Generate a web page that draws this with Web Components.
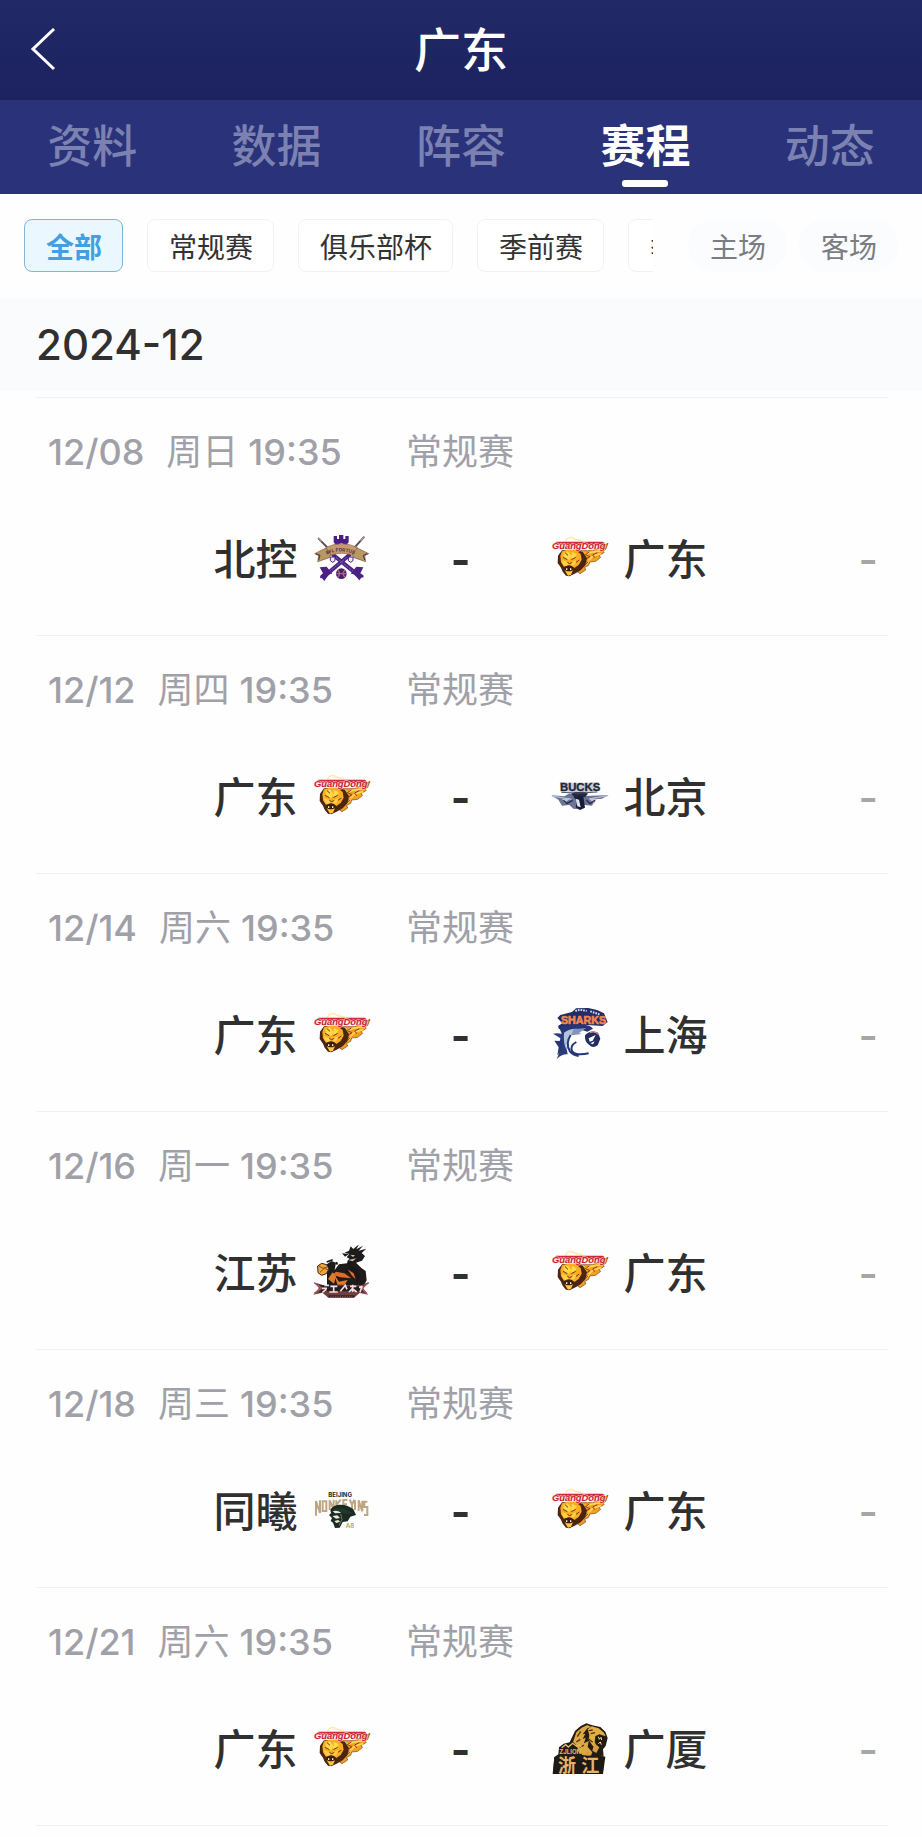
<!DOCTYPE html>
<html lang="zh-CN">
<head>
<meta charset="utf-8">
<meta name="viewport" content="width=device-width, initial-scale=1">
<title>广东</title>
<style>
    body {
        margin: 0;
        background: #fefefe;
        color: #303030;
        font-family: Inter, "Noto Sans CJK SC", sans-serif;
    }
</style>
</head>
<body>
<team-page></team-page>

<script>
const logos = {
    beikong: {
        box: '39 33 174 174',
        art: `
            <g fill="none" stroke-linecap="round">
                <path d="M56 56L100 101M191 52L147 101" stroke="#5c4d55" stroke-width="6"/>
                <path d="M57 55l7 7M190 53l-7 8" stroke="#b5a494" stroke-width="4"/>
                <path d="M148 105L74 168M100 105L175 166" stroke="#4b2185" stroke-width="12"/>
                <path d="M139 113L88 155M109 113l52 42" stroke="#9d83bd" stroke-width="2" stroke-dasharray="5 5"/>
            </g>
            <path d="M101 48h10v9h6V45h13v12h6v-9h10v19l-5 6v17h-35V73l-5-6z" fill="#4a1d83"/>
            <path d="M119 86V72q5-6 10 0v14z" fill="#d8cde5"/>
            <path d="M59 142l21-2 17 21-10 2-14 20-7-8-6-1 1-7 8-7zM190 142l-21-2-17 21 10 2 16 18 6-8 7-1-1-6-9-6z" fill="#4b2185"/>
            <path d="M78 82q47-22 94 0l-8 26q-39-17-78 0z" fill="#c79a6b" stroke="#8a6748" stroke-width="2"/>
            <path d="M78 84L44 101l12 6-3 18 35-12 4-12zM172 84l34 17-12 6 3 18-35-12-5-12z" fill="#b99864" stroke="#74583c" stroke-width="2"/>
            <path d="M48 101l12 5-4 14M202 101l-12 5 4 14" fill="none" stroke="#3f3040" stroke-width="3"/>
            <path id="ribbon" d="M80 104q45-22 100 6" fill="none"/>
            <text font-size="14" font-weight="700" fill="#4f3140"><textPath href="#ribbon">BFL FORTUS</textPath></text>
            <path d="M91 111h14v11l-7 5-7-5zM145 111h14v11l-7 5-7-5z" fill="#efeaf5" stroke="#4b2185" stroke-width="3"/>
            <circle cx="124" cy="161" r="16" fill="#4a1d6c"/>
            <path d="M113 150q11 11 0 22M135 150q-11 11 0 22M109 161h30" fill="none" stroke="#a46c79" stroke-width="4"/>`
    },
    guangdong: {
        box: '45 33 174 174',
        art: `
            <path d="M88 65q6-15 20-12l12 6 20 4" fill="none" stroke="#ffeab0" stroke-width="5"/>
            <path d="M110 92h60l46-22-7 18-8 5 4 4-16 10 5 5-15 12-18 2-3 10-12 6 3 8-17 11-8-6-20-6z" fill="#f3a021" stroke="#75401a" stroke-width="2"/>
            <path d="M207 79l-17 14-30 5-14 8M196 101l-24 6-14 14M140 140l18-16M144 96l-8 13 14 9-8 14" fill="none" stroke="#ffd857" stroke-width="5"/>
            <path d="M160 96l-12 8 14 6-20 12 13 5-15 13M184 98l-14 7 6 8" fill="none" stroke="#8e3b1c" stroke-width="3"/>
            <path d="M78 91l-12 16-1 22 10 14 5 12 10 12 10 2 16-8 18-10 14-15 5-21-12-19-22-7z" fill="#4b2412"/>
            <path d="M78 94l16-5 24 1 16 12 3 17-9 16-13 9-8-7-14-2-9 6-9-14-2-19z" fill="#f8ad22"/>
            <path d="M82 99l14-5 10 14-7 13-15-9zM108 95l14 8-6 11-11 4z" fill="#ffd94c"/>
            <path d="M78 120l16 6 4 9-10 4-8-8zM104 126l17-5-5 13-9 4z" fill="#ffd04a"/>
            <path d="M81 112l13 7M106 119l13-7M87 98l9 8M120 127l10-7M94 127l7 4 8-4" fill="none" stroke="#713912" stroke-width="3"/>
            <path d="M86 143l13-5 13 4-3 14-9 7-9-6z" fill="#3b1d10"/>
            <path d="M86 151l7 3h11l7-3-6 13-9 3z" fill="#ffc641"/>
            <path d="M92 145v5M104 145v5" stroke="#fff5ce" stroke-width="4"/>
            <path d="M60 65h140l6 4-3 5H54z" fill="#cf273b"/>
            <text x="48" y="87" font-family="Liberation Sans" font-size="28" font-weight="700" font-style="italic" fill="#c8203a" stroke="#ffe0c8" stroke-width="3" paint-order="stroke">GuangDong</text>`
    },
    beijing: {
        box: '45 27 174 174',
        art: `
            <path d="M46 106l39 3 16-9 18 7 15-6 17 7 67-3-20 11-19 2-11 19-26-3-11 14-19-2-12-11-22 2-11-18z" fill="#6b7492"/>
            <path d="M49 108l57 10M160 117l55-10" stroke="#b1bbcf" stroke-width="4"/>
            <path d="M78 117l25-3-16 15M182 117l-23-2 15 17" fill="#bfc8df"/>
            <path d="M82 121l11 9 17-9M177 121l-15 10-11-11" fill="none" stroke="#252c4d" stroke-width="4"/>
            <path d="M118 91l15-5 11 8-2 15 5 34-15 7-13-8 4-19-10-12z" fill="#171c37"/>
            <path d="M127 93l9 5-7 6zM119 116l10 3 5 23-10-3z" fill="#dae0ee"/>
            <path d="M105 101q27-14 51 0l-9 11-15-5-14 6z" fill="#242943"/>
            <path d="M71 66q61 6 119 0l-5 27q-54 6-108 1z" fill="#c6ccd7"/>
            <text x="72" y="92" font-family="Liberation Sans" font-size="34" font-weight="700" fill="#1d273a" stroke="#1d273a" stroke-width="1">BUCKS</text>
            <path d="M76 97q53 5 108-1" fill="none" stroke="#4c566c" stroke-width="3"/>`
    },
    shanghai: {
        box: '45 36 174 174',
        art: `
            <path d="M73 60l35-9 12-11 37-1 26 6 21 10 11 26-15 12-48-3-66 5-17 8-3-10 13-8-15-16z" fill="#222c68"/>
            <path d="M118 48q16-6 34 0M163 49l30 10" fill="none" stroke="#d5dce8" stroke-width="6" stroke-dasharray="5 3"/>
            <text x="75" y="86" font-family="Liberation Sans" font-size="32" font-weight="700" fill="#f28650" stroke="#f28650" stroke-width="2">SHARKS</text>
            <path d="M70 99q32-14 73-10 21 2 28 12l-17 9-16-5-32 7-23 18-2 31-17 20 4-24-13-20 16 1 7-20z" fill="#263575"/>
            <path d="M51 116q19 10 30 20-7 30-19 57 14-16 33-15l-5-28 11-27q-26-11-50-7z" fill="#2b3c7d"/>
            <path d="M84 113q24-18 55-9-27 7-38 24-14 24-8 40-12-22-9-55" fill="#b4c3db"/>
            <path d="M107 119q15-15 34-8l17 6q-16 9-21 23l-15 3q-16 15-3 26l27 6-27 7q-26-7-27-30 1-25 15-33" fill="#fff"/>
            <path d="M112 103l39-4-22 15 8 3-31 4z" fill="#8293bc"/>
            <path d="M104 120q-17 26-2 49 8 11 26 14M121 141q-21 12-12 28 11 14 49 6" fill="none" stroke="#243779" stroke-width="6"/>
            <path d="M147 121q16-18 39-8l7 18-8 20q-15 10-25-1-15-8-13-29" fill="#232d60"/>
            <path d="M158 130l21-10-9 17-9 3zM163 145l13-6-5 9z" fill="#fff"/>
            <path d="M162 113q15-7 26 6" fill="none" stroke="#d77f87" stroke-width="4"/>`
    },
    jiangsu: {
        box: '39 30 174 174',
        art: `
            <path d="M81 120l-2-31 15-11 14 5-4 22 13-17 24-3 18-8-19-10 8-10-14-4 13-6 5-13 8 8 17-14-8 15 20-11-13 15 23-6-14 13 10 9-9 14-18 6 17 17 12 8 3 28-12 22-63 4-44-13z" fill="#1e1b1b"/>
            <path d="M126 55l21 2-12 8zM171 67q-30 0-30 18l31 20 9 23-12 15q-8-30-36-31" fill="#19171a"/>
            <path d="M145 75l24-5-11 9zM151 59l14 2-6 5z" fill="#d9c1a0"/>
            <path d="M108 110l25 5 21 15-33-3-23-8zM143 103l18 12 6 18-11-11z" fill="#e46a25"/>
            <path d="M84 132l14-20 10 12-6 22zM104 120l13 20 26-5-9 14h-22z" fill="#e07a2c"/>
            <path d="M53 93l12-8 15 4 7 13-8 14-14 5-11-8z" fill="#efa83d" stroke="#302019" stroke-width="3"/>
            <path d="M57 93l12 7 14-5M60 112l13-12 12 5" fill="none" stroke="#8b4d20" stroke-width="3"/>
            <path d="M80 81l18-7M109 81l3 8" stroke="#171717" stroke-width="5"/>
            <path d="M41 142l28 8h116l23-10-18 20 14 19-25-5-17 14H85l-18-15-27 6 17-20z" fill="#70403f"/>
            <path d="M57 151l124 3 14-3-13 11 10 10-21-3H74l-19 4 12-11z" fill="#241d22"/>
            <path d="M43 144l22 15-22 16M206 143l-21 17 16 16" fill="none" stroke="#a95d5f" stroke-width="4"/>
            <path d="M66 160h15M73 151h14M67 172l12-9M91 154h21M101 154v16M88 171h25M121 169l15-18 5 12M150 154h19M158 149v22M147 171l10-10 13 10M177 157l11-3M180 172l5-15" fill="none" stroke="#f4dde0" stroke-width="5"/>
            <path d="M86 184h77" stroke="#251a1d" stroke-width="6"/>
            <path d="M91 184h66" stroke="#c96a77" stroke-width="2" stroke-dasharray="4 3"/>`
    },
    tongxi: {
        box: '39 24 174 174',
        art: `
            <text x="85" y="67" font-size="18" font-weight="700" fill="#1d292a">BEIJING</text>
            <g fill="none" stroke="#bda782" stroke-width="6">
                <path d="M48 122V78l12 36V76M68 108V79h11v29zM89 105V76l12 27V74M109 76v26M122 74l-12 15 13 15M142 75h-12v27h12M132 88h9M149 74l7 15v14M163 74l-7 15"/>
                <path d="M165 76v29M176 107V76l11 33V77M202 80h-9v16h9v24h-10"/>
            </g>
            <path d="M91 104q8-14 27-15 26-1 42 14l8 17-17 5-8 14-15 2-9 17-14 1-6-16-7-5 4-9-9-9 6-5z" fill="#1b2a22"/>
            <path d="M98 109l17-4 8 9-18 1zM97 123l15-2 8 8-12 2zM103 138l12-3 5 5-11 4z" fill="#ece9d9"/>
            <path d="M97 104q25-10 46 3l21 8-27 2-22-8z" fill="#22382a"/>
            <path d="M122 117l4 17-9 17" fill="none" stroke="#6c8065" stroke-width="3"/>
            <text x="137" y="158" font-size="19" fill="#a18c67">A8</text>`
    },
    guangsha: {
        box: '45 33 174 174',
        art: `
            <path d="M50 192l5-51 12-8 2-21 14-11 18-4 16-34 16-14 18-9 18 6 24 5 15 14 7 19-6 24-8 10 2 22-8-4 10 9-5 47z" fill="#231c15"/>
            <path d="M111 96l10-29 16-14 17-8 12 6-12 4-14 18 8-2-8 16 9-4-5 17 14-7-3 18 14 16-6 11-24-3-12-16-8-16z" fill="#dca842"/>
            <path d="M155 58l12-9 21 6 16 13 5 11-19-6-12 6-2 17 8 17-14-6-12-17 2-15z" fill="#e3ae43"/>
            <path d="M158 62l12-2M164 71l13-3M155 85l15 12M124 80l10-16M121 96l12-8M132 113l12-8" fill="none" stroke="#4b3515" stroke-width="4"/>
            <path d="M180 77l24 4-7 10-2 16-10-5-5-14z" fill="#20140f"/>
            <path d="M187 80l3 8 5-6 2 8M187 101l6-5 3 8" fill="none" stroke="#ffe7a0" stroke-width="3"/>
            <path d="M174 99l16 13-9 17-12-7 3-11zM145 129l12-5 11 11-18 2z" fill="#d79d42"/>
            <path d="M77 113l12-9 8 7 13-11 12 9 9-4 6 9" fill="none" stroke="#e3bd69" stroke-width="4"/>
            <text x="70" y="133" font-size="18" font-weight="700" fill="#e3bd69">ZJLION</text>
            <path d="M55 141h82v-4h57l14 3-7 52H51z" fill="#1d1915"/>
            <g font-size="54" font-weight="700" fill="#e6b36a">
                <text x="66" y="186">浙</text>
                <text x="136" y="186">江</text>
            </g>`
    }
};

class TeamLogo extends HTMLElement {
    connectedCallback() {
        const logo = logos[this.getAttribute('team')];
        this.attachShadow({ mode: 'open' });
        this.shadowRoot.innerHTML = `
            <style>
                :host {
                    display: block;
                    flex: none;
                    width: 58px;
                    height: 58px;
                }

                svg {
                    display: block;
                    width: 100%;
                    height: 100%;
                }
            </style>
            <svg viewBox="${logo.box}" aria-hidden="true">${logo.art}</svg>
        `;
    }
}

class PageHeader extends HTMLElement {
    connectedCallback() {
        this.attachShadow({ mode: 'open' });
        this.shadowRoot.innerHTML = `
            <style>
                :host {
                    display: block;
                    background: linear-gradient(#222967, #1c2260);
                    color: #fff;
                }

                header {
                    display: grid;
                    grid-template-columns: 56px 1fr 56px;
                    align-items: center;
                    height: 100px;
                }

                button {
                    display: flex;
                    justify-content: flex-end;
                    padding: 0;
                    border: 0;
                    background: none;
                    color: inherit;
                }

                h1 {
                    margin: 0;
                    font-size: 47px;
                    line-height: 60px;
                    font-weight: 500;
                    text-align: center;
                }
            </style>
            <header>
                <button aria-label="返回">
                    <svg width="26" height="44" viewBox="0 0 26 44" fill="none" stroke="currentColor" stroke-width="3">
                        <path d="M24 1L3 21l21 20"/>
                    </svg>
                </button>
                <h1><slot></slot></h1>
            </header>
        `;
    }
}

class TabBar extends HTMLElement {
    connectedCallback() {
        this.attachShadow({ mode: 'open' });
        this.shadowRoot.innerHTML = `
            <style>
                :host {
                    display: block;
                    background: #2a327a;
                }

                nav {
                    display: grid;
                    grid-template-columns: repeat(5, 1fr);
                }

                ::slotted(a) {
                    display: block;
                    box-sizing: border-box;
                    height: 94px;
                    padding-top: 4px;
                    color: #7b81b1;
                    font-size: 45px;
                    line-height: 86px;
                    font-weight: 500;
                    text-align: center;
                    text-decoration: none;
                }

                ::slotted(a[aria-current]) {
                    color: #fff;
                    font-weight: 700;
                }

                ::slotted(a[aria-current])::after {
                    content: "";
                    display: block;
                    width: 46px;
                    height: 7px;
                    margin: -10px auto 0;
                    border-radius: 3px;
                    background: #fff;
                }
            </style>
            <nav><slot></slot></nav>
        `;
    }
}

class FilterChip extends HTMLElement {
    connectedCallback() {
        this.attachShadow({ mode: 'open' });
        this.shadowRoot.innerHTML = `
            <style>
                :host {
                    display: block;
                    flex: none;
                }

                button {
                    display: block;
                    box-sizing: border-box;
                    height: 53px;
                    padding: 4px 20px 0 21px;
                    border: 1px solid #f1f2f4;
                    border-radius: 8px;
                    background: #fff;
                    color: #333;
                    font-family: inherit;
                    font-size: 28px;
                    line-height: 46px;
                    white-space: nowrap;
                }

                :host([active]) button {
                    border-color: #84b5d2;
                    background: #eaf7ff;
                    color: #429fe2;
                    font-weight: 700;
                }

                :host([round]) button {
                    border-color: transparent;
                    border-radius: 26px;
                    background: #fafcfe;
                    color: #7b7d82;
                }
            </style>
            <button><slot></slot></button>
        `;
    }
}

class FilterBar extends HTMLElement {
    connectedCallback() {
        this.attachShadow({ mode: 'open' });
        this.shadowRoot.innerHTML = `
            <style>
                :host {
                    display: flex;
                    gap: 35px;
                    padding: 25px 24px 26px;
                }

                .kinds {
                    display: flex;
                    flex: 1;
                    gap: 24px;
                    min-width: 0;
                    overflow: hidden;
                }

                .venues {
                    display: flex;
                    gap: 12px;
                }
            </style>
            <div class="kinds"><slot></slot></div>
            <div class="venues"><slot name="venue"></slot></div>
        `;
    }
}

class MonthGroup extends HTMLElement {
    connectedCallback() {
        this.attachShadow({ mode: 'open' });
        this.shadowRoot.innerHTML = `
            <style>
                :host {
                    display: block;
                }

                h2 {
                    margin: 0;
                    padding: 19px 36px 18px;
                    background: #fafbfd;
                    font-size: 42px;
                    line-height: 56px;
                    font-weight: 500;
                }

                .games {
                    margin: 0 34px 0 36px;
                    padding-top: 6px;
                }

                .games::after {
                    content: "";
                    display: block;
                    height: 11px;
                    border-top: 1px solid #f0f1f3;
                }
            </style>
            <h2>${this.getAttribute('month')}</h2>
            <div class="games"><slot></slot></div>
        `;
    }
}

class GameRow extends HTMLElement {
    connectedCallback() {
        const home = this.getAttribute('home').split(' ');
        const away = this.getAttribute('away').split(' ');
        const [date, day, time] = this.getAttribute('when').split(' ');
        this.attachShadow({ mode: 'open' });
        this.shadowRoot.innerHTML = `
            <style>
                :host {
                    display: block;
                    box-sizing: border-box;
                    height: 238px;
                    padding: 30px 10px 0 7px;
                    border-top: 1px solid #f0f1f3;
                }

                .when {
                    display: flex;
                    padding-left: 5px;
                    color: #a0a1a8;
                    font-size: 36px;
                    line-height: 48px;
                    white-space: nowrap;
                }

                time {
                    display: flex;
                    width: 358px;
                    font-weight: 500;
                }

                .date {
                    margin-right: 22px;
                }

                .day {
                    margin-right: 10px;
                    font-weight: 400;
                }

                .match {
                    display: grid;
                    grid-template-columns: 1fr 180px 1fr;
                    align-items: center;
                    margin-top: 55px;
                    font-size: 42px;
                    line-height: 58px;
                    font-weight: 500;
                }

                .team {
                    display: flex;
                    align-items: center;
                    gap: 15px;
                }

                .home {
                    justify-content: flex-end;
                }

                .score {
                    font-weight: 700;
                    text-align: center;
                }

                .result {
                    margin-left: auto;
                    color: #a6a6a6;
                }
            </style>
            <div class="when">
                <time><span class="date">${date}</span><span class="day">${day}</span><span>${time}</span></time>
                <span>常规赛</span>
            </div>
            <div class="match">
                <div class="team home"><span>${home[0]}</span><team-logo team="${home[1]}"></team-logo></div>
                <div class="score">-</div>
                <div class="team"><team-logo team="${away[1]}"></team-logo><span>${away[0]}</span><span class="result">-</span></div>
            </div>
        `;
    }
}

class TeamPage extends HTMLElement {
    connectedCallback() {
        this.attachShadow({ mode: 'open' });
        this.shadowRoot.innerHTML = `
            <style>
                :host {
                    display: block;
                }
            </style>
            <page-header>广东</page-header>
            <tab-bar>
                <a href="#info">资料</a>
                <a href="#stats">数据</a>
                <a href="#roster">阵容</a>
                <a href="#schedule" aria-current="page">赛程</a>
                <a href="#news">动态</a>
            </tab-bar>
            <filter-bar>
                <filter-chip active>全部</filter-chip>
                <filter-chip>常规赛</filter-chip>
                <filter-chip>俱乐部杯</filter-chip>
                <filter-chip>季前赛</filter-chip>
                <filter-chip>季后赛</filter-chip>
                <filter-chip round slot="venue">主场</filter-chip>
                <filter-chip round slot="venue">客场</filter-chip>
            </filter-bar>
            <month-group month="2024-12">
                <game-row when="12/08 周日 19:35" home="北控 beikong" away="广东 guangdong"></game-row>
                <game-row when="12/12 周四 19:35" home="广东 guangdong" away="北京 beijing"></game-row>
                <game-row when="12/14 周六 19:35" home="广东 guangdong" away="上海 shanghai"></game-row>
                <game-row when="12/16 周一 19:35" home="江苏 jiangsu" away="广东 guangdong"></game-row>
                <game-row when="12/18 周三 19:35" home="同曦 tongxi" away="广东 guangdong"></game-row>
                <game-row when="12/21 周六 19:35" home="广东 guangdong" away="广厦 guangsha"></game-row>
            </month-group>
        `;
    }
}

customElements.define('team-logo', TeamLogo);
customElements.define('page-header', PageHeader);
customElements.define('tab-bar', TabBar);
customElements.define('filter-chip', FilterChip);
customElements.define('filter-bar', FilterBar);
customElements.define('month-group', MonthGroup);
customElements.define('game-row', GameRow);
customElements.define('team-page', TeamPage);
</script>
</body>
</html>
